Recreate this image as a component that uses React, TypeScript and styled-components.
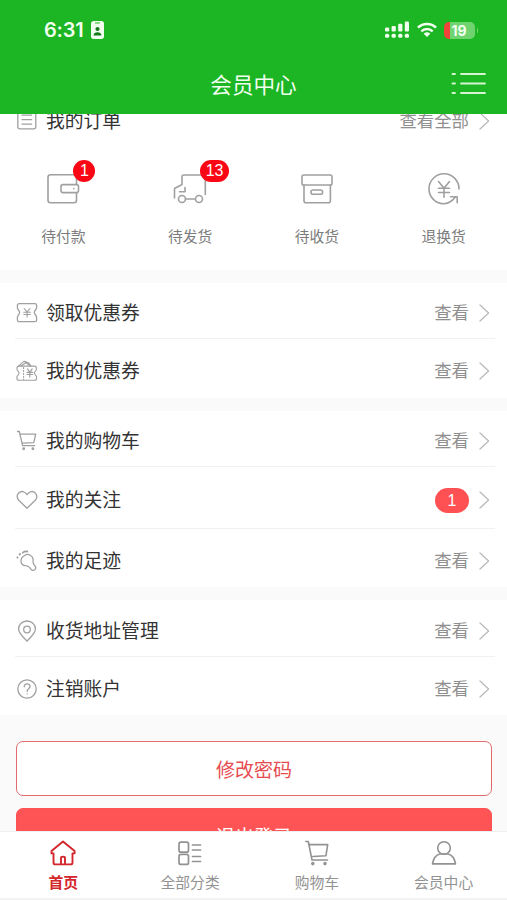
import React from "react";
import styled, { createGlobalStyle } from "styled-components";

const GlobalStyle = createGlobalStyle`
  * { box-sizing: border-box; }
  body {
    margin: 0;
    background: #fff;
    font-family: "Liberation Sans", "Noto Sans CJK SC", sans-serif;
  }
`;

const Screen = styled.div`
  display: flex;
  flex-direction: column;
  width: 507px;
  height: 900px;
  overflow: hidden;
  background: #fafafa;
`;

const Header = styled.header`
  flex: none;
  height: 114px;
  background: #1cb523;
  color: #f2fff0;
`;

const StatusBar = styled.div`
  display: flex;
  align-items: center;
  justify-content: space-between;
  height: 60px;
  padding: 0 32px 0 44px;
`;

const StatusSide = styled.div<{ $gap: number }>`
  display: flex;
  align-items: center;
  gap: ${(p) => p.$gap}px;
`;

const Clock = styled.span`
  font: 600 20px/24px Inter, sans-serif;
  letter-spacing: -0.2px;
  width: 42px;
  white-space: nowrap;
`;

const Battery = styled.div`
  position: relative;
  width: 31px;
  height: 17px;
  border-radius: 5px;
  background: linear-gradient(to right, #f0433a 6px, #6fd36f 6px);
  font: 700 14px/17px Inter, sans-serif;
  text-align: center;
  padding-right: 1px;

  &::after {
    content: "";
    position: absolute;
    right: -3px;
    top: 6px;
    width: 1.5px;
    height: 5px;
    border-radius: 0 2px 2px 0;
    background: #6fd36f;
  }
`;

const TitleBar = styled.div`
  display: grid;
  grid-template-columns: 60px 1fr 56px;
  align-items: center;
  height: 48px;
`;

const Title = styled.h1`
  grid-column: 2;
  margin: 0;
  padding: 3px 4px 0 0;
  text-align: center;
  font-size: 21.6px;
  line-height: 32px;
  font-weight: 400;
`;

const Content = styled.main`
  flex: 1;
  min-height: 0;
  overflow: hidden;
  display: flex;
  flex-direction: column;
`;

const Group = styled.section<{ $scrolled?: boolean }>`
  flex: none;
  background: #fff;
  margin-top: ${(p) => (p.$scrolled ? -22 : 13)}px;
`;

const Row = styled.div<{ $height: number; $line?: boolean; $shift?: number }>`
  display: flex;
  align-items: center;
  height: ${(p) => p.$height}px;
  margin: 0 12px 0 15px;
  padding: ${(p) => p.$shift ?? 5}px 5px 0 1px;
  border-bottom: ${(p) => (p.$line ? "1px solid #f1f1f1" : "0")};
`;

const RowLabel = styled.span`
  flex: 1;
  margin-left: 8px;
  padding-top: 2px;
  font-size: 18.8px;
  line-height: 28px;
  color: #333;
`;

const RowValue = styled.span`
  margin-right: 10px;
  font-size: 17.4px;
  line-height: 26px;
  color: #8f8f8f;
`;

const CountPill = styled.span`
  width: 34px;
  height: 25px;
  margin-right: 10px;
  border-radius: 13px;
  background: #ff5153;
  color: #fff;
  font-size: 16px;
  line-height: 25px;
  text-align: center;
`;

const Tiles = styled.div`
  display: grid;
  grid-template-columns: repeat(4, 1fr);
  height: 122px;
  padding-top: 22px;
`;

const Tile = styled.div`
  display: flex;
  flex-direction: column;
  align-items: center;
`;

const TileIcon = styled.div`
  position: relative;
  width: 38px;
  height: 38px;
`;

const Badge = styled.span`
  position: absolute;
  left: 29px;
  top: -10px;
  min-width: 22px;
  height: 22px;
  padding: 0 5.5px;
  border-radius: 11px;
  background: #fa0715;
  color: #fff;
  font-size: 16px;
  line-height: 22px;
  text-align: center;
`;

const TileLabel = styled.span`
  margin-top: 18px;
  font-size: 14.8px;
  line-height: 22px;
  color: #7c7c7c;
`;

const Actions = styled.div`
  display: flex;
  flex-direction: column;
  gap: 12px;
  padding: 26px 15px 0 16px;
`;

const ActionButton = styled.button<{ $filled?: boolean }>`
  flex: none;
  height: 55px;
  padding: 0;
  border: ${(p) => (p.$filled ? "1px solid #ff5153" : "1.5px solid #e36b6f")};
  border-radius: 7px;
  background: ${(p) => (p.$filled ? "#ff5456" : "#fff")};
  color: ${(p) => (p.$filled ? "#fff" : "#e64b50")};
  font-family: inherit;
  font-size: 19px;
`;

const TabBar = styled.nav`
  flex: none;
  display: grid;
  grid-template-columns: repeat(4, 1fr);
  height: 69px;
  background: #fff;
  border-top: 1px solid #f0f0f0;
  border-bottom: 2px solid #f3f3f3;
`;

const Tab = styled.a<{ $active?: boolean }>`
  display: flex;
  flex-direction: column;
  align-items: center;
  padding-top: 7px;
  color: ${(p) => (p.$active ? "#d3262b" : "#929292")};
  font-size: 14.8px;
  font-weight: ${(p) => (p.$active ? 700 : 400)};
  line-height: 22px;
`;

const TabText = styled.span`
  margin-top: 5px;
`;

const Drawing = styled.svg`
  display: block;
  flex: none;
  fill: none;
  stroke-linecap: round;
  stroke-linejoin: round;
`;

type IconProps = { size: number; stroke?: string; width?: number; children: React.ReactNode };

const Icon = ({ size, stroke = "#a0a0a0", width = 1.3, children }: IconProps) => (
  <Drawing width={size} height={size} viewBox={`0 0 ${size} ${size}`} stroke={stroke} strokeWidth={width}>
    {children}
  </Drawing>
);

const Chevron = () => (
  <Drawing width="11" height="18" viewBox="0 0 11 18" stroke="#b8b8b8" strokeWidth="1.2">
    <path d="M1 1l8.6 8L1 17" />
  </Drawing>
);

const OrderIcon = () => (
  <Icon size={22}>
    <rect x="1.8" y="0.8" width="18" height="18" rx="1.8" />
    <path d="M6 5.2h9.6M6 9.7h9.6M6 14.2h9.6" />
  </Icon>
);

const CouponIcon = () => (
  <Icon size={22}>
    <path d="M3 1.7h16a1.6 1.6 0 0 1 1.6 1.6v2.5c0 1.8-2.3 2.6-2.3 4.6s2.3 2.8 2.3 5v2.7a1.6 1.6 0 0 1-1.6 1.6H3a1.6 1.6 0 0 1-1.6-1.6v-2.7c0-2.2 2.2-3 2.2-5S1.400 7.600 1.400 5.800V3.300A1.600 1.600 0 0 1 3 1.700Z" />
    <path strokeWidth="1.1" d="M8.200 6.500l2.900 3.400L14 6.500M11.100 9.900v5M7.800 10.200h6.600M7.800 12.500h6.600" />
  </Icon>
);

const WalletCouponIcon = () => (
  <Icon size={22} width={1.1}>
    <path d="M3.500 6.100h14.900q2 0 2 1.900v1.200c0 1.700-2 2.200-2 3.900s2.200 2.200 2.200 4v1.100q0 2-2 2H2.800q-1.900 0-1.900-2v-1.100c0-1.800 2.200-2.300 2.200-4S1 10.900 1 9.200V8q0-1.900 2.500-1.900Z" />
    <path d="M2.600 5.900l5.600-4.700 5.700 4.600M4.800 6l5.600-3.500M9 1.600l3.400 1.100 2.500 3.200" />
    <path strokeDasharray="1.100 1.800" d="M7.600 7.500v12" />
    <path strokeWidth="1.200" d="M11.500 8.900l2.300 3.200 2.400-3.200M13.800 12.100v5M11 12.400h5.600M11 14.500h5.600" />
  </Icon>
);

const SmallCartIcon = () => (
  <Icon size={22}>
    <path d="M1.500 1.500h1.800l3.300 14.200h12M4.600 4.200h15.100l-1.900 8.400-11.400.6" />
    <circle cx="7.700" cy="18.800" r=".8" /><circle cx="16.900" cy="18.800" r=".8" />
  </Icon>
);

const HeartIcon = () => (
  <Icon size={22}>
    <path d="M11 19.300 3 11.500C-1.400 6.900 3.400.900 8 3c1.200.5 2.300 1.600 3 2.700C11.800 4.500 12.700 3.500 14 3c4.900-2 9.200 4.200 5 8.500Z" />
  </Icon>
);

const FootprintIcon = () => (
  <Icon size={22}>
    <path d="M8.900 5.200c3.500-2.100 8 .8 8.200 4.300.2 2.100-.7 3.200.8 5 1.500 1.600 2.500 2.700 1.700 4.300-.9 1.900-3.500 2-4.600.5-1.600-2.200-2-3.200-5.500-3.600-5-.5-6.700-7-.6-10.500Z" />
    <path strokeWidth="1.800" d="M6.800 2.600q2-1.500 4.500-1.100M3.500 4.500l.7-.6M1.400 7.500l.2-.2" />
  </Icon>
);

const PinIcon = () => (
  <Icon size={22}>
    <path d="M11 21c-2-2.200-8.400-7.400-8.400-12a8.400 8 0 0 1 16.800 0c0 4.600-6.400 9.800-8.400 12Z" />
    <circle cx="11" cy="9.500" r="3.300" />
  </Icon>
);

const HelpIcon = () => (
  <Icon size={22}>
    <circle cx="11" cy="11" r="9.200" />
    <path d="M8.200 8.800c.1-3.900 5.900-3.900 5.800-.3 0 2.300-2.900 2.300-2.900 4.900M11.100 15.800v.1" />
  </Icon>
);

const PayIcon = () => (
  <Icon size={38} width={1.600}>
    <path d="M32.500 14V7.200a2.500 2.500 0 0 0-2.500-2.500H6.500A2.500 2.500 0 0 0 4 7.200v23a2.500 2.500 0 0 0 2.500 2.500H30a2.500 2.500 0 0 0 2.500-2.500v-7.500" />
    <rect x="17" y="14.600" width="17.500" height="8" rx="2" />
    <path d="M29.800 18.600h.1" />
  </Icon>
);

const TruckIcon = () => (
  <Icon size={38} width={1.600}>
    <path d="M3.500 28v-9.500l7.500-4V6.700q0-1.700 1.700-1.700h20q1.600 0 1.600 1.600V24.500M14 17.500v4.300H8.500M14.500 29h9" />
    <circle cx="11" cy="29" r="3.500" /><circle cx="28" cy="29" r="3.500" />
  </Icon>
);

const BoxIcon = () => (
  <Icon size={38} width={1.600}>
    <rect x="4" y="5" width="30" height="10" rx="1.800" />
    <path d="M6 15.200v15.600q0 2 2 2h22.400q2 0 2-2V15.200" />
    <rect x="13" y="20" width="11.600" height="4.200" rx="2" />
  </Icon>
);

const RefundIcon = () => (
  <Icon size={38} width={1.600}>
    <path d="M34 19A15 15 0 1 0 18.500 33.800c5 0 8.500-2.500 12-6.800M25.500 26.700h6.700v6" />
    <path d="M13.500 11.500l5.500 6.800 5.500-6.800M19 18.300v9M13.500 18.300h11M13.500 22.500h11" />
  </Icon>
);

const HomeIcon = () => (
  <Icon size={28} width={1.900} stroke="#d3262b">
    <path d="M2.500 12.100 14 2.500l11.600 9.600v2.300h-2.100v9.100q0 1.900-1.900 1.900H6.400q-1.900 0-1.900-1.900v-9.100h-2Z" />
    <path d="M12 25v-6q0-1.400 2-1.400t2 1.400v6" />
  </Icon>
);

const CategoryIcon = () => (
  <Icon size={28} width={1.700} stroke="#929292">
    <rect x="3" y="3.200" width="9.500" height="10" rx="2" />
    <rect x="3" y="15.400" width="9.500" height="10" rx="2" />
    <path d="M16.500 6h8M16.500 11h8M16.500 17.500h8M16.500 22.500h8" />
  </Icon>
);

const CartIcon = () => (
  <Icon size={28} width={1.600} stroke="#929292">
    <path d="M2.800 2.500h2.500L9 21h15.500M6.600 5.600h18.100l-1.800 11.200-13 .7" />
    <circle cx="9.800" cy="24.600" r="1" /><circle cx="22" cy="24.600" r="1" />
  </Icon>
);

const MemberIcon = () => (
  <Icon size={28} width={1.600} stroke="#929292">
    <circle cx="14" cy="9" r="6.300" />
    <path d="M2.500 24.900q1.300-8.400 7.500-9.900h8q6.200 1.500 7.500 9.900Z" />
  </Icon>
);

const MenuIcon = () => (
  <Drawing width="36" height="24" viewBox="0 0 36 24" stroke="#d5f5d2" strokeWidth="1.800">
    <path d="M1.500 2h2.500M10 2h24M1.500 11.500h2.500M10 11.500h24M1.500 21h2.500M10 21h24" />
  </Drawing>
);

const IdIcon = () => (
  <Drawing width="13" height="18" viewBox="0 0 13 18">
    <rect width="13" height="18" rx="2.700" fill="#f2fff0" />
    <path d="M4.500 2h4" stroke="#1cb523" />
    <circle cx="6.500" cy="8" r="2.100" fill="#147a1c" />
    <path d="M2.500 14.500q.5-3.300 4-3.300t4 3.300Z" fill="#147a1c" />
  </Drawing>
);

const SignalIcon = () => (
  <Drawing width="25" height="18" viewBox="0 0 25 18">
    <g fill="#f2fff0">
      <rect x="0" y="6.500" width="4.200" height="4" rx="1.200" />
      <rect x="6.600" y="5" width="4.200" height="5.500" rx="1.200" />
      <rect x="13.200" y="2.700" width="4.200" height="7.800" rx="1.200" />
      <rect x="19.800" y="0.500" width="4.200" height="10" rx="1.200" />
      <rect x="0" y="12.800" width="4.200" height="4" rx="1.500" />
      <rect x="6.600" y="12.800" width="4.200" height="4" rx="1.500" />
      <rect x="13.200" y="12.800" width="4.200" height="4" rx="1.500" />
      <rect x="19.800" y="12.800" width="4.200" height="4" rx="1.500" />
    </g>
  </Drawing>
);

const WifiIcon = () => (
  <Drawing width="20" height="16" viewBox="0 0 20 16" stroke="#f2fff0" strokeWidth="2.400">
    <path strokeLinecap="butt" d="M.9 5.700c5-5 13.200-5 18.200 0M4.300 9.300c3.200-3.100 8.200-3.100 11.400 0" />
    <path d="M10 15 6.700 11.700a4.700 4.700 0 0 1 6.600 0Z" fill="#f2fff0" stroke="none" />
  </Drawing>
);

const tiles = [
  { label: "待付款", icon: <PayIcon />, badge: "1" },
  { label: "待发货", icon: <TruckIcon />, badge: "13" },
  { label: "待收货", icon: <BoxIcon /> },
  { label: "退换货", icon: <RefundIcon /> },
];

type RowData = { label: string; icon: React.ReactNode; height: number; count?: string };

const groups: RowData[][] = [
  [
    { label: "领取优惠券", icon: <CouponIcon />, height: 56 },
    { label: "我的优惠券", icon: <WalletCouponIcon />, height: 59 },
  ],
  [
    { label: "我的购物车", icon: <SmallCartIcon />, height: 56 },
    { label: "我的关注", icon: <HeartIcon />, height: 62, count: "1" },
    { label: "我的足迹", icon: <FootprintIcon />, height: 58 },
  ],
  [
    { label: "收货地址管理", icon: <PinIcon />, height: 57 },
    { label: "注销账户", icon: <HelpIcon />, height: 58 },
  ],
];

const tabs = [
  { label: "首页", icon: <HomeIcon />, active: true },
  { label: "全部分类", icon: <CategoryIcon /> },
  { label: "购物车", icon: <CartIcon /> },
  { label: "会员中心", icon: <MemberIcon /> },
];

export default function App() {
  return (
    <>
      <GlobalStyle />
      <Screen>
        <Header>
          <StatusBar>
            <StatusSide $gap={5}>
              <Clock>6:31</Clock>
              <IdIcon />
            </StatusSide>
            <StatusSide $gap={7}>
              <SignalIcon />
              <WifiIcon />
              <Battery>19</Battery>
            </StatusSide>
          </StatusBar>
          <TitleBar>
            <Title>会员中心</Title>
            <MenuIcon />
          </TitleBar>
        </Header>
        <Content>
          <Group $scrolled>
            <Row $height={56} $shift={2}>
              <OrderIcon />
              <RowLabel>我的订单</RowLabel>
              <RowValue>查看全部</RowValue>
              <Chevron />
            </Row>
            <Tiles>
              {tiles.map((t) => (
                <Tile key={t.label}>
                  <TileIcon>
                    {t.icon}
                    {t.badge && <Badge>{t.badge}</Badge>}
                  </TileIcon>
                  <TileLabel>{t.label}</TileLabel>
                </Tile>
              ))}
            </Tiles>
          </Group>
          {groups.map((rows, g) => (
            <Group key={g}>
              {rows.map((r, i) => (
                <Row key={r.label} $height={r.height} $line={i < rows.length - 1}>
                  {r.icon}
                  <RowLabel>{r.label}</RowLabel>
                  {r.count ? <CountPill>{r.count}</CountPill> : <RowValue>查看</RowValue>}
                  <Chevron />
                </Row>
              ))}
            </Group>
          ))}
          <Actions>
            <ActionButton>修改密码</ActionButton>
            <ActionButton $filled>退出登录</ActionButton>
          </Actions>
        </Content>
        <TabBar>
          {tabs.map((t) => (
            <Tab key={t.label} $active={t.active}>
              {t.icon}
              <TabText>{t.label}</TabText>
            </Tab>
          ))}
        </TabBar>
      </Screen>
    </>
  );
}
